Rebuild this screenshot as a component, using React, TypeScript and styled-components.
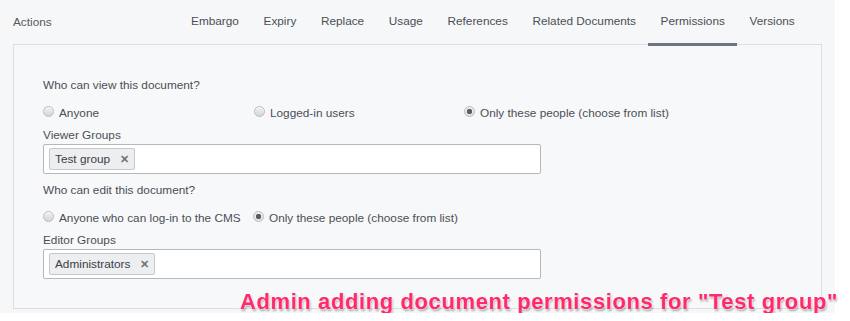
import React from "react";
import styled, { createGlobalStyle } from "styled-components";

const Global = createGlobalStyle`
  html, body { margin: 0; padding: 0; background: #ffffff; }
  body { font-family: "Liberation Sans", Arial, Helvetica, sans-serif; }
`;

const Page = styled.div`
  width: 835px;
  height: 313px;
  background: #f6f7f9;
  position: relative;
  box-sizing: border-box;
`;

const Header = styled.div`
  display: flex;
  align-items: stretch;
  height: 44px;
  padding: 0 28px 0 13px;
  box-sizing: border-box;
`;

const Title = styled.div`
  flex: 1;
  display: flex;
  align-items: center;
  font-size: 11.8px;
  color: #555a60;
`;

const Tabs = styled.div`
  display: flex;
`;

const Tab = styled.div<{ $active?: boolean }>`
  display: flex;
  align-items: center;
  padding: 0 12.3px 1px;
  font-size: 11.8px;
  color: #4a4f55;
  border-bottom: 3px solid ${(p) => (p.$active ? "#6c7480" : "transparent")};
  margin-bottom: -2px;
  box-sizing: border-box;
`;

const Panel = styled.div`
  margin: 0 13px;
  height: 265px;
  border: 1px solid #dcdee1;
  background: #f7f8fa;
  box-sizing: border-box;
  padding: 32px 29px 0;
`;

const Question = styled.div`
  font-size: 11.8px;
  color: #4a4f55;
  line-height: 16px;
`;

const RadioRow = styled.div<{ $cols: string }>`
  display: grid;
  grid-template-columns: ${(p) => p.$cols};
  margin-top: 12px;
  height: 16px;
`;

const RadioLabel = styled.label`
  display: flex;
  align-items: center;
  gap: 5px;
  font-size: 11.8px;
  color: #4a4f55;
  line-height: 16px;
  white-space: nowrap;
`;

const RadioDot = styled.span<{ $checked?: boolean }>`
  width: 11px;
  height: 11px;
  border-radius: 50%;
  box-sizing: border-box;
  border: 1px solid #b9bcc0;
  background: ${(p) =>
    p.$checked
      ? "radial-gradient(circle at 50% 50%, #5a5d61 0, #5a5d61 2.4px, #e6e7e9 3px, #d6d7d9 100%)"
      : "linear-gradient(#f2f2f2, #d3d4d6)"};
  box-shadow: inset 0 1px 1px rgba(255, 255, 255, 0.7);
  margin-top: -4px;
  flex: none;
`;

const FieldLabel = styled.div`
  font-size: 11.8px;
  color: #4a4f55;
  line-height: 16px;
  margin-top: 6px;
`;

const TagInput = styled.div`
  width: 498px;
  height: 30px;
  margin-top: 1px;
  border: 1px solid #b5b8bc;
  border-radius: 2px;
  background: #ffffff;
  box-sizing: border-box;
  display: flex;
  align-items: center;
  padding: 0 5px;
  margin-bottom: 8px;
`;

const Tag = styled.span`
  display: inline-flex;
  align-items: center;
  gap: 10px;
  height: 22px;
  padding: 0 5px;
  border: 1px solid #c5c8cc;
  border-radius: 2px;
  background: #edeef0;
  font-size: 11.8px;
  color: #3c4046;
  box-sizing: border-box;
`;

const Remove = styled.span`
  font-size: 11px;
  color: #707479;
  font-weight: bold;
`;

const Annotation = styled.div`
  position: absolute;
  right: -3px;
  top: 289px;
  font-size: 22px;
  font-weight: bold;
  color: #ff2a6e;
  white-space: nowrap;
  letter-spacing: 0.6px;
  text-shadow: 0 0 2px #fff, 0 0 2px #fff, 1px 2px 2px rgba(0, 0, 0, 0.35);
`;

export default function App() {
  return (
    <>
      <Global />
      <Page>
        <Header>
          <Title>Actions</Title>
          <Tabs>
            <Tab>Embargo</Tab>
            <Tab>Expiry</Tab>
            <Tab>Replace</Tab>
            <Tab>Usage</Tab>
            <Tab>References</Tab>
            <Tab>Related Documents</Tab>
            <Tab $active>Permissions</Tab>
            <Tab>Versions</Tab>
          </Tabs>
        </Header>
        <Panel>
          <Question>Who can view this document?</Question>
          <RadioRow $cols="211px 210px 1fr">
            <RadioLabel><RadioDot />Anyone</RadioLabel>
            <RadioLabel><RadioDot />Logged-in users</RadioLabel>
            <RadioLabel><RadioDot $checked />Only these people (choose from list)</RadioLabel>
          </RadioRow>
          <FieldLabel>Viewer Groups</FieldLabel>
          <TagInput>
            <Tag>Test group<Remove>✕</Remove></Tag>
          </TagInput>
          <Question>Who can edit this document?</Question>
          <RadioRow $cols="210px 1fr">
            <RadioLabel><RadioDot />Anyone who can log-in to the CMS</RadioLabel>
            <RadioLabel><RadioDot $checked />Only these people (choose from list)</RadioLabel>
          </RadioRow>
          <FieldLabel>Editor Groups</FieldLabel>
          <TagInput>
            <Tag>Administrators<Remove>✕</Remove></Tag>
          </TagInput>
        </Panel>
        <Annotation>Admin adding document permissions for "Test group"</Annotation>
      </Page>
    </>
  );
}
